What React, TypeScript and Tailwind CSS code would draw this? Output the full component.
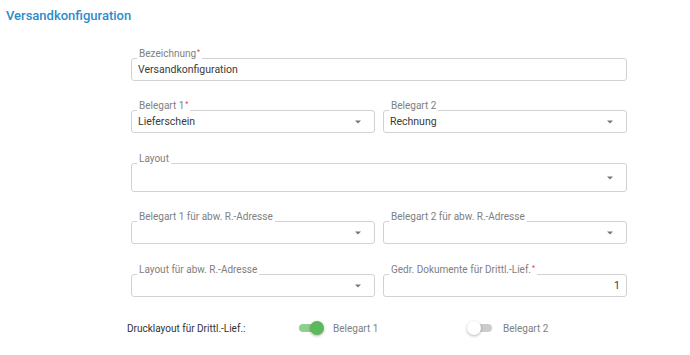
import type { ReactNode } from 'react';

// Outlined field with the label sitting in a notch of the top border
const Field = ({
    label,
    required,
    value,
    select,
    align = 'left',
    height = 'h-[23px]',
}: {
    label: string;
    required?: boolean;
    value?: string;
    select?: boolean;
    align?: 'left' | 'right';
    height?: string;
}) => (
    <div className={`relative flex-1 ${height} rounded-[3px] border border-[#d2d2d2] bg-white`}>
        <span className="absolute left-[5px] top-[-12px] bg-white px-[2px] text-[10px] leading-[13px] text-[#808080]">
            {label}
            {required && <span className="relative top-[-3px] ml-[1px] text-[7px] text-[#e53935]">*</span>}
        </span>
        <div
            className={`flex h-full items-center px-[6px] text-[10.5px] text-[#3a3a3a] ${
                align === 'right' ? 'justify-end pr-[6px]' : ''
            }`}
        >
            {value}
        </div>
        {select && (
            <span className="absolute right-[13px] top-1/2 -translate-y-1/2 border-x-[3px] border-t-[3px] border-x-transparent border-t-[#777]" />
        )}
    </div>
);

const Row = ({ children, className = '' }: { children: ReactNode; className?: string }) => (
    <div className={`flex gap-[8px] ${className}`}>{children}</div>
);

const Toggle = ({ on }: { on: boolean }) => (
    <div className="relative h-[14px] w-[26px]">
        <div
            className={`absolute left-[1px] right-[1px] top-[3px] h-[8px] rounded-full ${
                on ? 'bg-[#8fd08f]' : 'bg-[#cccccc]'
            }`}
        />
        <div
            className={`absolute top-0 h-[14px] w-[14px] rounded-full shadow-[0_1px_3px_rgba(0,0,0,0.3)] ${
                on ? 'right-0 bg-[#5cb85c]' : 'left-0 bg-white'
            }`}
        />
    </div>
);

export default function App() {
    return (
        <div className="h-[355px] w-[690px] overflow-hidden bg-white font-['Roboto',sans-serif]">
            <h1 className="px-[6px] pt-[6px] text-[13px] font-medium leading-[20px] text-[#2e8bcb]">
                Versandkonfiguration
            </h1>

            <div className="ml-[131px] w-[496px]">
                <Row className="mt-[32px]">
                    <Field label="Bezeichnung" required value="Versandkonfiguration" />
                </Row>
                <Row className="mt-[29px]">
                    <Field label="Belegart 1" required value="Lieferschein" select />
                    <Field label="Belegart 2" value="Rechnung" select />
                </Row>
                <Row className="mt-[30px]">
                    <Field label="Layout" select height="h-[29px]" />
                </Row>
                <Row className="mt-[29px]">
                    <Field label="Belegart 1 für abw. R.-Adresse" select />
                    <Field label="Belegart 2 für abw. R.-Adresse" select />
                </Row>
                <Row className="mt-[30px]">
                    <Field label="Layout für abw. R.-Adresse" select />
                    <Field label="Gedr. Dokumente für Drittl.-Lief." required value="1" align="right" />
                </Row>
            </div>

            <div className="ml-[127px] mt-[21px] flex h-[20px] items-center text-[10px]">
                <span className="w-[171px] text-[#333]">Drucklayout für Drittl.-Lief.:</span>
                <Toggle on />
                <span className="ml-[9px] w-[134px] text-[#808080]">Belegart 1</span>
                <Toggle on={false} />
                <span className="ml-[10px] text-[#808080]">Belegart 2</span>
            </div>
        </div>
    );
}
